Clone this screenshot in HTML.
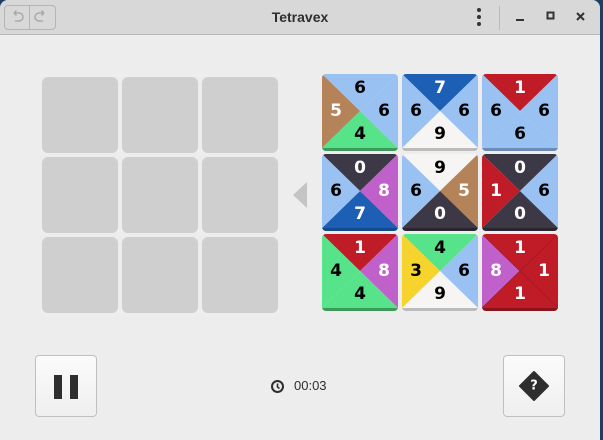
<!DOCTYPE html><html><head><style>
body{margin:0;width:603px;height:440px;background:#1d3f63;overflow:hidden;font-family:"Liberation Sans",sans-serif}
.win{position:absolute;left:0;top:0;width:600px;height:440px;background:#ededed;border-radius:8px 8px 0 0;overflow:hidden}
.hdr{position:absolute;left:0;top:0;width:600px;height:34px;background:#d8d8d8;border-bottom:1px solid #b8b8b8}
.title{position:absolute;left:0;width:600px;top:9px;text-align:center;font-weight:bold;font-size:14px;color:#2e2e2e}
.cell{position:absolute;width:76px;height:76px;background:#cfcfcf;border-radius:6px}
.btn{position:absolute;width:60px;height:60px;border:1px solid #c0c0c0;border-radius:4px;background:linear-gradient(#fbfbfb,#efefef)}
svg text{font-family:"DejaVu Sans","Liberation Sans",sans-serif;font-weight:bold;font-size:17px;text-anchor:middle;dominant-baseline:central}
</style></head><body><div class="win">
<div class="hdr">
<div style="position:absolute;left:4px;top:5px;width:50px;height:23px;border:1px solid #b5b5b5;border-radius:4px"></div>
<div style="position:absolute;left:29px;top:5px;width:1px;height:25px;background:#b5b5b5"></div>
<svg style="position:absolute;left:9px;top:9px" width="40" height="16"><path d="M5 4h5a4 4 0 0 1 0 8H6M5 4l2.5-2.5M5 4l2.5 2.5" stroke="#aaa" fill="none" stroke-width="1.5"/><path d="M35 4h-5a4 4 0 0 0 0 8h4M35 4l-2.5-2.5M35 4l-2.5 2.5" stroke="#aaa" fill="none" stroke-width="1.5"/></svg>
<div class="title">Tetravex</div>
<svg style="position:absolute;left:470px;top:6px" width="130" height="24"><circle cx="9" cy="4" r="2" fill="#333"/><circle cx="9" cy="11" r="2" fill="#333"/><circle cx="9" cy="18" r="2" fill="#333"/><rect x="29" y="0" width="1" height="24" fill="#bbb"/><rect x="46" y="13" width="8" height="2" fill="#333"/><rect x="77.5" y="6.5" width="6" height="6" fill="none" stroke="#333" stroke-width="2"/><path d="M107 7l7 7M114 7l-7 7" stroke="#333" stroke-width="2"/></svg>
</div>
<div class="cell" style="left:42px;top:77px"></div><div class="cell" style="left:122px;top:77px"></div><div class="cell" style="left:202px;top:77px"></div>
<div class="cell" style="left:42px;top:157px"></div><div class="cell" style="left:122px;top:157px"></div><div class="cell" style="left:202px;top:157px"></div>
<div class="cell" style="left:42px;top:237px"></div><div class="cell" style="left:122px;top:237px"></div><div class="cell" style="left:202px;top:237px"></div>
<svg style="position:absolute;left:293px;top:182px" width="14" height="26"><path d="M14 0V26L0 13Z" fill="#c4c4c4"/></svg>
<svg style="position:absolute;left:322px;top:74px" width="236" height="238" id="t">
<defs><clipPath id="c"><rect width="76" height="77" rx="4"/></clipPath></defs>
<g clip-path="url(#c)" transform="translate(0,0)"><path d="M0 0H76L38 37Z" fill="#99c1f1"/><path d="M76 0V74L38 37Z" fill="#99c1f1"/><path d="M0 74H76L38 37Z" fill="#57e389"/><path d="M0 0V74L38 37Z" fill="#b5835a"/><rect y="74" width="76" height="3" fill="#3e9a5a"/><text x="38" y="14">6</text><text x="62" y="37">6</text><text x="38" y="60">4</text><text x="14" y="37" fill="#fff">5</text></g>
<g clip-path="url(#c)" transform="translate(80,0)"><path d="M0 0H76L38 37Z" fill="#1c5fb5"/><path d="M76 0V74L38 37Z" fill="#99c1f1"/><path d="M0 74H76L38 37Z" fill="#f6f5f4"/><path d="M0 0V74L38 37Z" fill="#99c1f1"/><rect y="74" width="76" height="3" fill="#bbb"/><text x="38" y="14" fill="#fff">7</text><text x="62" y="37">6</text><text x="38" y="60">9</text><text x="14" y="37">6</text></g>
<g clip-path="url(#c)" transform="translate(160,0)"><path d="M0 0H76L38 37Z" fill="#c01c28"/><path d="M76 0V74L38 37Z" fill="#99c1f1"/><path d="M0 74H76L38 37Z" fill="#99c1f1"/><path d="M0 0V74L38 37Z" fill="#99c1f1"/><rect y="74" width="76" height="3" fill="#6a8bb5"/><text x="38" y="14" fill="#fff">1</text><text x="62" y="37">6</text><text x="38" y="60">6</text><text x="14" y="37">6</text></g>
<g clip-path="url(#c)" transform="translate(0,80)"><path d="M0 0H76L38 37Z" fill="#3d3846"/><path d="M76 0V74L38 37Z" fill="#c061cb"/><path d="M0 74H76L38 37Z" fill="#1c5fb5"/><path d="M0 0V74L38 37Z" fill="#99c1f1"/><rect y="74" width="76" height="3" fill="#154a8c"/><text x="38" y="14" fill="#fff">0</text><text x="62" y="37" fill="#fff">8</text><text x="38" y="60" fill="#fff">7</text><text x="14" y="37">6</text></g>
<g clip-path="url(#c)" transform="translate(80,80)"><path d="M0 0H76L38 37Z" fill="#f6f5f4"/><path d="M76 0V74L38 37Z" fill="#b5835a"/><path d="M0 74H76L38 37Z" fill="#3d3846"/><path d="M0 0V74L38 37Z" fill="#99c1f1"/><rect y="74" width="76" height="3" fill="#2a2630"/><text x="38" y="14">9</text><text x="62" y="37" fill="#fff">5</text><text x="38" y="60" fill="#fff">0</text><text x="14" y="37">6</text></g>
<g clip-path="url(#c)" transform="translate(160,80)"><path d="M0 0H76L38 37Z" fill="#3d3846"/><path d="M76 0V74L38 37Z" fill="#99c1f1"/><path d="M0 74H76L38 37Z" fill="#3d3846"/><path d="M0 0V74L38 37Z" fill="#c01c28"/><rect y="74" width="76" height="3" fill="#2a2630"/><text x="38" y="14" fill="#fff">0</text><text x="62" y="37">6</text><text x="38" y="60" fill="#fff">0</text><text x="14" y="37" fill="#fff">1</text></g>
<g clip-path="url(#c)" transform="translate(0,160)"><path d="M0 0H76L38 37Z" fill="#c01c28"/><path d="M76 0V74L38 37Z" fill="#c061cb"/><path d="M0 74H76L38 37Z" fill="#57e389"/><path d="M0 0V74L38 37Z" fill="#57e389"/><rect y="74" width="76" height="3" fill="#3e9a5a"/><text x="38" y="14" fill="#fff">1</text><text x="62" y="37" fill="#fff">8</text><text x="38" y="60">4</text><text x="14" y="37">4</text></g>
<g clip-path="url(#c)" transform="translate(80,160)"><path d="M0 0H76L38 37Z" fill="#57e389"/><path d="M76 0V74L38 37Z" fill="#99c1f1"/><path d="M0 74H76L38 37Z" fill="#f6f5f4"/><path d="M0 0V74L38 37Z" fill="#f6d32d"/><rect y="74" width="76" height="3" fill="#bbb"/><text x="38" y="14">4</text><text x="62" y="37">6</text><text x="38" y="60">9</text><text x="14" y="37">3</text></g>
<g clip-path="url(#c)" transform="translate(160,160)"><path d="M0 0H76L38 37Z" fill="#c01c28"/><path d="M76 0V74L38 37Z" fill="#c01c28"/><path d="M0 74H76L38 37Z" fill="#c01c28"/><path d="M0 0V74L38 37Z" fill="#c061cb"/><path d="M0 0L76 74M76 0L0 74" stroke="#a01722" stroke-width="0.8"/><rect y="74" width="76" height="3" fill="#8a141d"/><text x="38" y="14" fill="#fff">1</text><text x="62" y="37" fill="#fff">1</text><text x="38" y="60" fill="#fff">1</text><text x="14" y="37" fill="#fff">8</text></g>
</svg>
<div class="btn" style="left:35px;top:355px"><div style="position:absolute;left:18px;top:19px;width:8px;height:24px;background:#2e2e2e"></div><div style="position:absolute;left:34px;top:19px;width:8px;height:24px;background:#2e2e2e"></div></div>
<div class="btn" style="left:503px;top:355px"><svg width="60" height="60"><path d="M30 16L44 30L30 44L16 30Z" fill="#2e2e2e" stroke="#2e2e2e" stroke-width="2" stroke-linejoin="round"/><text x="30" y="30" style="font-size:13px;fill:#fff">?</text></svg></div>
<svg style="position:absolute;left:270px;top:379px" width="16" height="16"><circle cx="7.5" cy="7.5" r="5.5" fill="none" stroke="#2e2e2e" stroke-width="2"/><path d="M7.5 4.5v3.5l2 1.5" stroke="#2e2e2e" stroke-width="1.6" fill="none"/></svg>
<div style="position:absolute;left:294px;top:378px;font-size:13px;color:#2e2e2e">00:03</div>
</div></body></html>
